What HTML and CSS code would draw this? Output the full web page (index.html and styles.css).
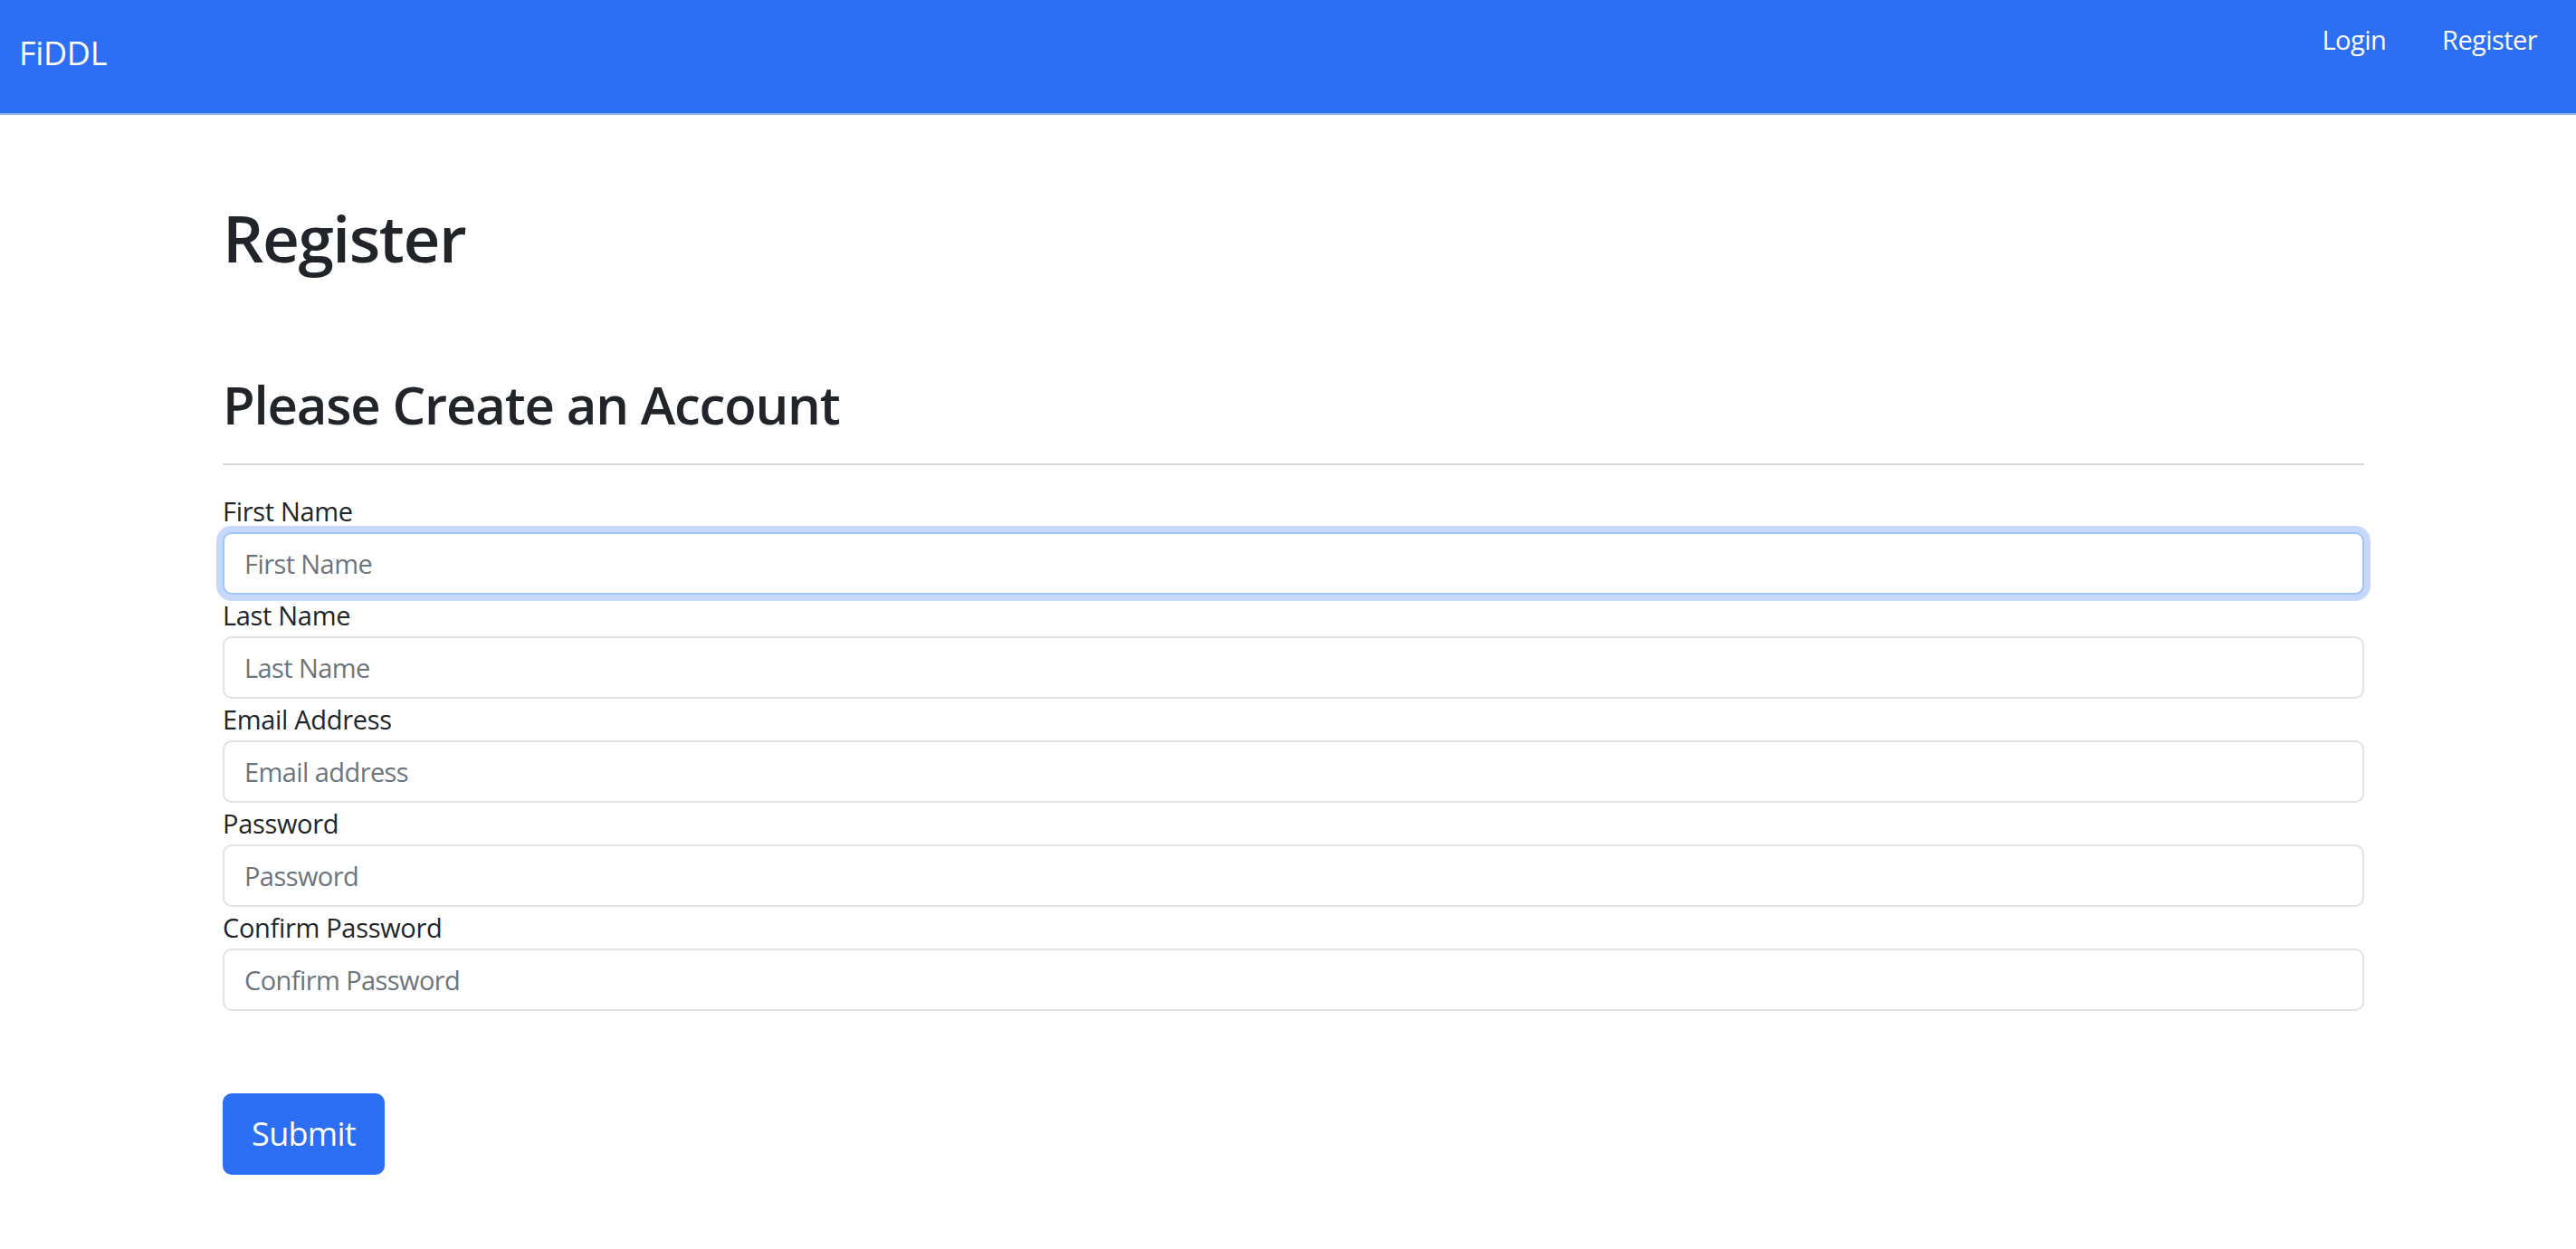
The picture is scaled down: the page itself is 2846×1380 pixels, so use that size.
FILE: index.html
```html
<!DOCTYPE html>
<html lang="en">
<head>
<meta charset="utf-8">
<title>FiDDL - Register</title>
<link rel="stylesheet" href="styles.css">
</head>
<body>
<nav class="navbar">
  <a class="brand" href="#">FiDDL</a>
  <ul class="nav-links">
    <li><a href="#">Login</a></li>
    <li><a href="#">Register</a></li>
  </ul>
</nav>
<main class="container">
  <h1 class="page-title">Register</h1>
  <h2 class="section-title">Please Create an Account</h2>
  <hr class="divider">
  <form class="form">
    <div class="field">
      <label class="field-label" for="first">First Name</label>
      <input class="field-input is-focused" id="first" type="text" placeholder="First Name">
    </div>
    <div class="field">
      <label class="field-label" for="last">Last Name</label>
      <input class="field-input" id="last" type="text" placeholder="Last Name">
    </div>
    <div class="field">
      <label class="field-label" for="email">Email Address</label>
      <input class="field-input" id="email" type="email" placeholder="Email address">
    </div>
    <div class="field">
      <label class="field-label" for="pw">Password</label>
      <input class="field-input" id="pw" type="password" placeholder="Password">
    </div>
    <div class="field">
      <label class="field-label" for="pw2">Confirm Password</label>
      <input class="field-input" id="pw2" type="password" placeholder="Confirm Password">
    </div>
    <button class="submit-btn" type="button">Submit</button>
  </form>
</main>
</body>
</html>
```

FILE: styles.css
```css
* { box-sizing: border-box; }
html, body { margin: 0; padding: 0; background: #ffffff; }
body {
  font-family: "Open Sans", "Noto Sans", sans-serif;
  color: #212529;
  letter-spacing: -0.02em;
}
.navbar {
  height: 127px;
  background: #2c6ff4;
  border-bottom: 2px solid #95b7f8;
  display: flex;
  align-items: flex-start;
  justify-content: space-between;
  padding: 0 43px 0 21px;
}
.brand {
  color: #ffffff;
  text-decoration: none;
  font-size: 36px;
  line-height: 36px;
  margin-top: 41px;
}
.nav-links {
  list-style: none;
  margin: 26px 0 0 0;
  padding: 0;
  display: flex;
  gap: 62px;
}
.nav-links a {
  color: #ffffff;
  text-decoration: none;
  font-size: 29px;
  line-height: 36px;
  letter-spacing: -0.02em;
}
.container {
  width: 2366px;
  margin: 0 0 0 246px;
  padding: 0;
}
.page-title {
  font-size: 71px;
  font-weight: 600;
  line-height: 1.2;
  letter-spacing: -0.02em;
  margin: 93px 0 0 0;
}
.section-title {
  font-size: 58px;
  font-weight: 600;
  line-height: 1.2;
  letter-spacing: -0.02em;
  margin: 107px 0 0 0;
}
.divider {
  border: 0;
  border-top: 2px solid #d8d8d8;
  margin: 30px 0 28px 0;
}
.form { display: flex; flex-direction: column; }
.field { display: flex; flex-direction: column; }
.field-label {
  font-size: 29px;
  line-height: 46px;
  height: 46px;
}
.field-input {
  height: 69px;
  width: 100%;
  border: 2px solid #dfe2e6;
  border-radius: 10px;
  padding: 0 22px;
  font-family: inherit;
  font-size: 29px;
  color: #212529;
  outline: none;
  letter-spacing: -0.02em;
}
.field-input::placeholder { color: #6c757d; }
.field-input.is-focused {
  border-color: #9fc3fb;
  box-shadow: 0 0 0 7px rgba(44, 111, 244, 0.27);
}
.submit-btn {
  align-self: flex-start;
  margin-top: 91px;
  width: 179px;
  height: 90px;
  padding: 0;
  background: #2c6ff4;
  color: #ffffff;
  border: 0;
  border-radius: 10px;
  font-family: inherit;
  font-size: 36px;
  letter-spacing: -0.02em;
  cursor: pointer;
}
```
